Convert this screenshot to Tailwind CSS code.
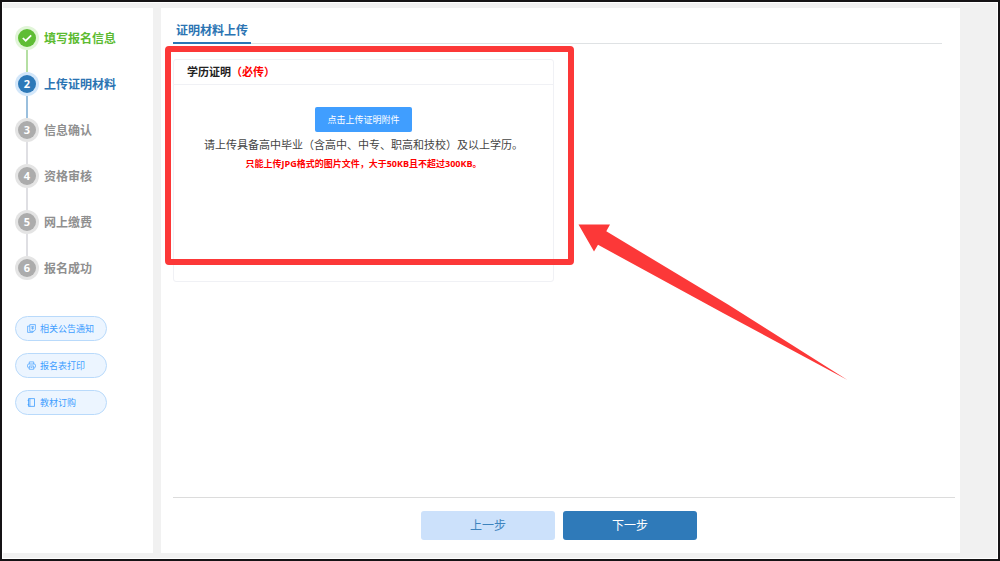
<!DOCTYPE html>
<html lang="zh-CN">
<head>
    <meta charset="UTF-8">
    <meta name="viewport" content="width=device-width, initial-scale=1.0">
    <title>证明材料上传</title>
    <script src="https://cdn.jsdelivr.net/npm/@tailwindcss/browser@4"></script>
    <style>
        body {
            font-family: 'Open Sans', 'Noto Sans CJK SC', sans-serif;
        }
    </style>
</head>
<body class="min-h-screen flex border-2 border-[#151315] bg-white p-px">
    <div class="flex-1 flex gap-2 bg-[#f1f1f1] py-[5px] pr-[37px]">

        <!-- Sidebar -->
        <aside class="w-[150px] shrink-0 bg-white pl-3 pt-[18px]">
            <ol class="text-xs font-bold text-[#8f8f8f]">
                <li class="flex gap-[5px] text-[#5dbb31]">
                    <div class="flex flex-col items-center">
                        <span class="size-6 rounded-full bg-[#e1f5d8] flex items-center justify-center">
                            <span class="size-[18px] rounded-full bg-[#5fbd35] flex items-center justify-center">
                                <svg class="size-[10px]" viewBox="0 0 10 10" fill="none" stroke="#fff" stroke-width="1.7"><path d="M.8 5 3.7 7.700 9.200 2.300"/></svg>
                            </span>
                        </span>
                        <span class="w-0.5 h-[22px] bg-[#b5dfa3]"></span>
                    </div>
                    <span class="leading-[26px]">填写报名信息</span>
                </li>
                <li class="flex gap-[5px] text-[#2b74b3]">
                    <div class="flex flex-col items-center">
                        <span class="size-6 rounded-full bg-[#d3e7fa] flex items-center justify-center">
                            <span class="size-[18px] rounded-full bg-[#2d79b8] text-white text-[11px] leading-[18px] text-center">2</span>
                        </span>
                        <span class="w-0.5 h-[22px] bg-[#9abfdd]"></span>
                    </div>
                    <span class="leading-[26px]">上传证明材料</span>
                </li>
                <li class="flex gap-[5px]">
                    <div class="flex flex-col items-center">
                        <span class="size-6 rounded-full bg-[#e4e4e4] flex items-center justify-center">
                            <span class="size-[18px] rounded-full bg-[#acacac] text-white text-[11px] leading-[18px] text-center">3</span>
                        </span>
                        <span class="w-0.5 h-[22px] bg-[#dfdfe3]"></span>
                    </div>
                    <span class="leading-[26px]">信息确认</span>
                </li>
                <li class="flex gap-[5px]">
                    <div class="flex flex-col items-center">
                        <span class="size-6 rounded-full bg-[#e4e4e4] flex items-center justify-center">
                            <span class="size-[18px] rounded-full bg-[#acacac] text-white text-[11px] leading-[18px] text-center">4</span>
                        </span>
                        <span class="w-0.5 h-[22px] bg-[#dfdfe3]"></span>
                    </div>
                    <span class="leading-[26px]">资格审核</span>
                </li>
                <li class="flex gap-[5px]">
                    <div class="flex flex-col items-center">
                        <span class="size-6 rounded-full bg-[#e4e4e4] flex items-center justify-center">
                            <span class="size-[18px] rounded-full bg-[#acacac] text-white text-[11px] leading-[18px] text-center">5</span>
                        </span>
                        <span class="w-0.5 h-[22px] bg-[#dfdfe3]"></span>
                    </div>
                    <span class="leading-[26px]">网上缴费</span>
                </li>
                <li class="flex gap-[5px]">
                    <div class="flex flex-col items-center">
                        <span class="size-6 rounded-full bg-[#e4e4e4] flex items-center justify-center">
                            <span class="size-[18px] rounded-full bg-[#acacac] text-white text-[11px] leading-[18px] text-center">6</span>
                        </span>
                    </div>
                    <span class="leading-[26px]">报名成功</span>
                </li>
            </ol>

            <!-- Quick links -->
            <nav class="mt-[34px] flex flex-col gap-3 w-[92px] text-[9px] text-[#409eff]">
                <a href="#" class="h-[25px] rounded-full border border-[#b9dafb] bg-[#ecf5ff] pl-[11px] flex items-center gap-1">
                    <svg class="size-[9px]" viewBox="0 0 9 9" fill="none" stroke="currentColor" stroke-width="0.7"><path d="M2.8.6h5.6v5l-1.400 1.700H2.8zM2.8 2.100H.6v6.300h5.200V7.300M4.200 2.700H7M4.200 4.200H7M5.600 2.700v3"/></svg>
                    相关公告通知
                </a>
                <a href="#" class="h-[25px] rounded-full border border-[#b9dafb] bg-[#ecf5ff] pl-[11px] flex items-center gap-1">
                    <svg class="size-[9px]" viewBox="0 0 9 9" fill="none" stroke="currentColor" stroke-width="0.7"><path d="M2.300 3V.9h4.400V3M2.300 6.900h-.7Q.5 6.600.5 5.400V4.200Q.6 3 1.800 3h5.400q1.200 0 1.300 1.200v1.200q0 1.200-1.100 1.500h-.7M2.300 5h4.400v3.300H2.300zM3.600 6.400h1.800"/></svg>
                    报名表打印
                </a>
                <a href="#" class="h-[25px] rounded-full border border-[#b9dafb] bg-[#ecf5ff] pl-[11px] flex items-center gap-1">
                    <svg class="size-[9px]" viewBox="0 0 9 9" fill="none" stroke="currentColor" stroke-width="0.8"><path d="M1.500.6h6v7.800h-6zM2.900.6v7.800M.6 2.400h1.500M.6 6.600h1.500"/></svg>
                    教材订购
                </a>
            </nav>
        </aside>

        <!-- Content -->
        <main class="flex-1 min-w-0 bg-white pl-3 pr-[5px] pt-3 pb-[13px] flex flex-col">
            <div class="mr-[13px] flex border-b border-[#dfe2e4]">
                <h1 class="-mb-px border-b-2 border-[#2b76b6] px-[3px] text-xs leading-[22px] font-bold text-[#2b74b3]">证明材料上传</h1>
            </div>

            <div class="relative mt-[15px] w-[381px]">
                <section class="min-h-[223px] rounded-[3px] border border-[#f0f1f5]">
                    <h2 class="border-b border-[#f0f1f5] px-[13px] text-[11px] leading-6 font-bold text-[#222]">学历证明<span class="text-[#ff0000]">（必传）</span></h2>
                    <div class="pt-[22px] flex flex-col items-center">
                        <button type="button" class="h-[25px] rounded-[2px] bg-[#409eff] px-3 text-[9px] text-white">点击上传证明附件</button>
                        <p class="mt-[3px] text-[11px] leading-5 text-[#444] whitespace-nowrap">请上传具备高中毕业（含高中、中专、职高和技校）及以上学历。</p>
                        <p class="text-[9px] leading-[18px] font-bold text-[#ff0000] whitespace-nowrap">只能上传JPG格式的图片文件，大于50KB且不超过300KB。</p>
                    </div>
                </section>

                <!-- Highlight box and arrow -->
                <div class="absolute -left-2 -top-[13px] w-[409px] h-[219px] rounded-[4px] border-6 border-[#fc3838] pointer-events-none"></div>
                <svg class="absolute left-[405px] top-[165px] w-[270px] h-[157px] pointer-events-none" viewBox="0 0 270 157" fill="#fc3838"><path d="M.5.5H32L28.300 7.300 150 80.500 269.500 156 145 89 20 20.800 16 27.500z"/></svg>
            </div>

            <footer class="mt-auto border-t border-[#dcdcdc] pt-[13px] pr-[10px] flex justify-center gap-2">
                <button type="button" class="w-[134px] h-[29px] rounded-[3px] bg-[#cce1fb] text-xs text-[#3d83bd]">上一步</button>
                <button type="button" class="w-[134px] h-[29px] rounded-[3px] bg-[#2f7ab9] text-xs text-white">下一步</button>
            </footer>
        </main>
    </div>
</body>
</html>
